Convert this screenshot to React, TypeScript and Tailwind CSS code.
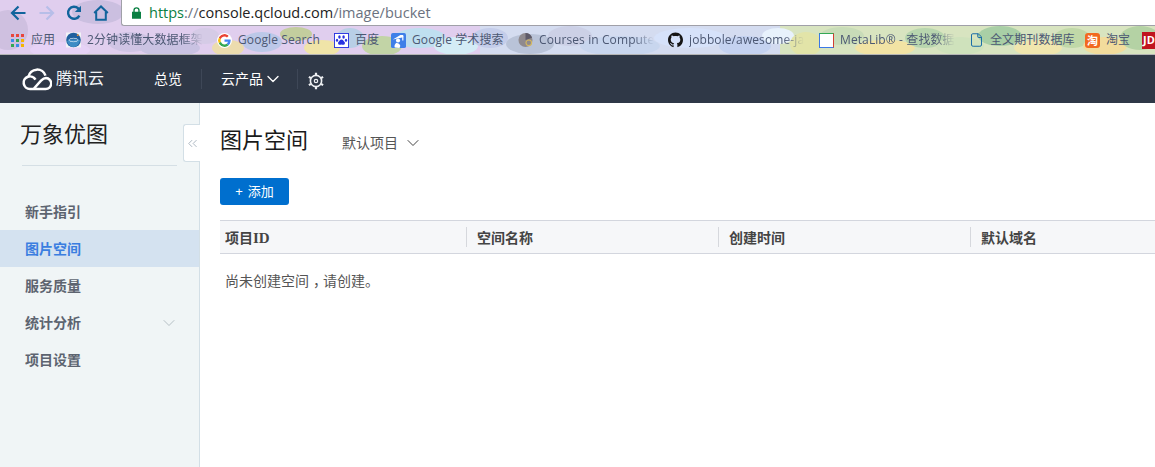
import React from 'react';
import { ChevronDown, ChevronsLeft, File } from 'lucide-react';

const cjk = '[font-family:"Liberation_Sans","Noto_Sans_CJK_SC",sans-serif]';
const chromeFont = '[font-family:"Open_Sans","Noto_Sans_CJK_SC",sans-serif]';

// cx, cy, rx, ry, fill for the browser theme wallpaper
const blobs: [number, number, number, number, string][] = [
  [8, 30, 20, 20, '#cfc0e0'], [98, 12, 26, 12, '#cbbfe0'], [60, 50, 30, 8, '#e6d2f6'],
  [130, 42, 22, 10, '#cfc4e4'], [170, 48, 30, 9, '#c9c2e2'], [205, 36, 14, 8, '#d5cbe6'],
  [228, 48, 16, 8, '#ecdcae'], [262, 42, 20, 10, '#bcc8e8'], [296, 34, 16, 7, '#c3cd9e'],
  [322, 48, 18, 8, '#f0e4a8'], [350, 38, 14, 10, '#b8cfe6'], [382, 46, 20, 10, '#c2d4a6'],
  [420, 38, 26, 10, '#bfdff0'], [456, 46, 22, 9, '#d4ecf6'], [490, 38, 18, 10, '#c4cdea'],
  [530, 44, 24, 10, '#b9c3d8'], [570, 36, 22, 10, '#ccd0e6'], [620, 46, 40, 10, '#c8d6ee'],
  [690, 38, 36, 10, '#d6e2fa'], [745, 46, 26, 10, '#c4d2f0'], [778, 36, 16, 8, '#e8f2fc'],
  [806, 44, 16, 12, '#e2e4a8'], [842, 36, 22, 9, '#c8dcb8'], [885, 48, 30, 8, '#f2e3a4'],
  [925, 38, 20, 10, '#b8d6ae'], [960, 46, 24, 9, '#cfe2bc'], [1000, 36, 22, 10, '#a9cfa6'],
  [1038, 48, 24, 8, '#f0e6ae'], [1072, 38, 18, 10, '#c0d8a8'], [1105, 46, 22, 9, '#f2dc9c'],
  [1140, 38, 20, 12, '#b4d2a4'],
];

function Wallpaper() {
  return (
    <svg className="absolute inset-0 h-full w-full" viewBox="0 0 1155 55">
      <rect width="1155" height="55" fill="#e0ceee" />
      <rect x="480" width="300" height="55" fill="#d4dcf0" />
      <rect x="780" width="375" height="55" fill="#d8e4c0" />
      {blobs.map(([cx, cy, rx, ry, fill], i) => (
        <ellipse key={i} cx={cx} cy={cy} rx={rx} ry={ry} fill={fill} />
      ))}
    </svg>
  );
}

function ToolbarIcons() {
  return (
    <div className="flex w-[121px] items-center pl-[10px]">
      <svg viewBox="0 0 16 16" className="h-[16px] w-[16px]" fill="none" stroke="#11649c" strokeWidth="2.2">
        <path d="M15.5 8H2M8.5 1.5 2 8l6.5 6.5" />
      </svg>
      <svg viewBox="0 0 16 16" className="ml-[13px] h-[16px] w-[16px]" fill="none" stroke="#b7bee8" strokeWidth="2.2">
        <path d="M.5 8H14M7.5 1.5 14 8l-6.5 6.5" />
      </svg>
      <svg viewBox="0 0 16 16" className="ml-[11px] h-[16px] w-[16px]" fill="none" stroke="#11649c" strokeWidth="2.4">
        <path d="M13.4 10.6A6 6 0 1 1 12.2 3.4L14 5.5" />
        <path d="M15 .8V7H8.8z" fill="#11649c" stroke="none" />
      </svg>
      <svg viewBox="0 0 16 16" className="ml-[11px] h-[16px] w-[16px]" fill="none" stroke="#11649c" strokeWidth="2">
        <path d="M1.2 8 8 1.5 14.8 8M3.2 7v7.8h9.6V7" />
      </svg>
    </div>
  );
}

function AppsIcon() {
  const colors = ['#e8453c', '#e8453c', '#e8453c', '#3b8ee8', '#34a853', '#f4b400', '#34a853', '#3b8ee8', '#f4b400'];
  return (
    <span className="grid h-[13px] w-[13px] grid-cols-3 gap-[2px]">
      {colors.map((c, i) => (
        <span key={i} className="h-[3px] w-[3px]" style={{ backgroundColor: c }} />
      ))}
    </span>
  );
}

function GoogleIcon() {
  return (
    <svg viewBox="0 0 48 48" className="h-[15px] w-[15px] rounded-full bg-white p-px">
      <path fill="#EA4335" d="M24 9.5c3.5 0 6.6 1.2 9.1 3.6l6.8-6.8C35.8 2.4 30.3 0 24 0 14.6 0 6.5 5.4 2.6 13.2l7.9 6.2C12.4 13.7 17.7 9.5 24 9.5z" />
      <path fill="#4285F4" d="M46.9 24.5c0-1.6-.1-3.1-.4-4.5H24v9h12.9c-.6 3-2.2 5.5-4.8 7.2l7.7 6c4.5-4.2 7.1-10.3 7.1-17.7z" />
      <path fill="#FBBC05" d="M10.5 28.6c-.5-1.4-.8-3-.8-4.6s.3-3.2.8-4.6l-7.9-6.2C.9 16.5 0 20.1 0 24s.9 7.5 2.6 10.8l7.9-6.2z" />
      <path fill="#34A853" d="M24 48c6.5 0 11.9-2.1 15.9-5.8l-7.7-6c-2.1 1.4-4.9 2.3-8.1 2.3-6.3 0-11.6-4.2-13.5-9.9l-7.9 6.2C6.5 42.6 14.6 48 24 48z" />
    </svg>
  );
}

function GithubIcon() {
  return (
    <svg viewBox="0 0 16 16" className="h-[16px] w-[16px]" fill="#161616">
      <path d="M8 0C3.58 0 0 3.58 0 8c0 3.54 2.29 6.53 5.47 7.59.4.07.55-.17.55-.38 0-.19-.01-.82-.01-1.49-2.01.37-2.53-.49-2.69-.94-.09-.23-.48-.94-.82-1.13-.28-.15-.68-.52-.01-.53.63-.01 1.08.58 1.23.82.72 1.21 1.87.87 2.33.66.07-.52.28-.87.51-1.07-1.78-.2-3.64-.89-3.64-3.95 0-.87.31-1.59.82-2.15-.08-.2-.36-1.02.08-2.12 0 0 .67-.21 2.2.82.64-.18 1.32-.27 2-.27s1.36.09 2 .27c1.53-1.04 2.2-.82 2.2-.82.44 1.1.16 1.92.08 2.12.51.56.82 1.27.82 2.15 0 3.07-1.87 3.75-3.65 3.95.29.25.54.73.54 1.48 0 1.07-.01 1.93-.01 2.2 0 .21.15.46.55.38A8.01 8.01 0 0 0 16 8c0-4.42-3.58-8-8-8z" />
    </svg>
  );
}

function BaiduIcon() {
  return (
    <svg viewBox="0 0 16 16" className="h-[15px] w-[15px]">
      <rect x=".5" y=".5" width="15" height="15" fill="white" stroke="#2932e1" />
      <g fill="#2932e1">
        <ellipse cx="5.8" cy="4.2" rx="1.3" ry="1.8" />
        <ellipse cx="10.2" cy="4.2" rx="1.3" ry="1.8" />
        <ellipse cx="3.2" cy="7.6" rx="1.2" ry="1.6" />
        <ellipse cx="12.8" cy="7.6" rx="1.2" ry="1.6" />
        <path d="M8 7c1.6 0 2 1.6 3 2.4 1.2 1 .8 3.2-1 3.2-.9 0-1.3-.3-2-.3s-1.1.3-2 .3c-1.8 0-2.2-2.2-1-3.2C6 8.600 6.400 7 8 7z" />
      </g>
    </svg>
  );
}

function ScholarIcon() {
  return (
    <svg viewBox="0 0 16 16" className="h-[15px] w-[15px]">
      <rect width="16" height="16" rx="2" fill="#3f7fe8" />
      <path d="M2 7 10 2l3 0v2.500z" fill="white" />
      <circle cx="7.500" cy="8" r="2.200" fill="white" />
      <path d="M6 10.500c3 1 5 2.500 3 5.500l-5-.5c-1-2 .5-4 2-5z" fill="white" />
      <rect x="12" y="3" width="1.200" height="5" fill="white" />
    </svg>
  );
}

function BigDataIcon() {
  return (
    <svg viewBox="0 0 16 16" className="h-[16px] w-[16px]">
      <rect width="16" height="16" fill="#f2f2f6" />
      <circle cx="8" cy="8" r="7.800" fill="#1f5f9e" />
      <path d="M1 9c3-2 10-2 14-1-1 5-4 7.500-7 7.500S2 13 1 9z" fill="#3d8cc4" />
      <ellipse cx="8" cy="8" rx="5" ry="1.800" fill="none" stroke="#d4e6f4" strokeWidth=".8" />
      <circle cx="12.500" cy="2.800" r="1" fill="#e88a30" />
    </svg>
  );
}

function CoursesIcon() {
  return (
    <svg viewBox="0 0 16 16" className="h-[16px] w-[16px]">
      <circle cx="8" cy="8" r="7.500" fill="#8f8a8e" />
      <path d="M8 .5a7.500 7.500 0 0 1 7 5L8 8z" fill="#5e5a68" />
      <circle cx="11.500" cy="11" r="3" fill="none" stroke="#d4b860" strokeWidth="1.200" />
    </svg>
  );
}

function Bookmark({ icon, label, width, fade }: { icon: React.ReactNode; label: string; width: number; fade?: boolean }) {
  return (
    <div className="flex shrink-0 items-center gap-[6px]" style={{ width }}>
      <span className="flex w-[15px] shrink-0 items-center justify-center">{icon}</span>
      <span
        className={`whitespace-nowrap text-[12px] tracking-[0.1px] text-[#4c5873] ${
          fade ? '[mask-image:linear-gradient(to_right,black_82%,transparent)]' : ''
        }`}
      >
        {label}
      </span>
    </div>
  );
}

function ChromeBar() {
  return (
    <div className={`relative h-[55px] overflow-hidden ${chromeFont}`}>
      <Wallpaper />
      <div className="relative flex h-[26px] items-center">
        <ToolbarIcons />
        <div className="flex h-[26px] flex-1 items-center rounded-bl-[3px] border-b border-l border-[#a0a0a8] bg-white pl-[10px] text-[14.5px]">
          <svg viewBox="0 0 10 13" className="mr-[8px] h-[12px] w-[9px] shrink-0" fill="#0b8043">
            <path d="M1.500 5V3.500a3.500 3.500 0 0 1 7 0V5H10v8H0V5zM3 5h4V3.500a2 2 0 0 0-4 0z" />
          </svg>
          <span className="text-[#0b8043]">https</span>
          <span className="text-[#6b7280]">://</span>
          <span className="text-[#222]">console.qcloud.com</span>
          <span className="text-[#6b7280]">/image/bucket</span>
        </div>
      </div>
      <div className="relative flex h-[29px] items-center border-b border-[#b5b5b5] pl-[10px]">
        <Bookmark icon={<AppsIcon />} label="应用" width={56} />
        <Bookmark icon={<BigDataIcon />} label="2分钟读懂大数据框架" width={151} fade />
        <Bookmark icon={<GoogleIcon />} label="Google Search" width={117} />
        <Bookmark icon={<BaiduIcon />} label="百度" width={57} />
        <Bookmark icon={<ScholarIcon />} label="Google 学术搜索" width={127} />
        <Bookmark icon={<CoursesIcon />} label="Courses in Compute" width={150} fade />
        <Bookmark icon={<GithubIcon />} label="jobbole/awesome-ja" width={151} fade />
        <Bookmark
          icon={<span className="h-[15px] w-[15px] border border-b-[#3b78e7] border-l-[#3b78e7] border-r-[#d23f31] border-t-[#34a853] bg-white" />}
          label="MetaLib® - 查找数据"
          width={150}
          fade
        />
        <Bookmark icon={<File size={16} strokeWidth={1.6} className="text-[#1b6ea8]" />} label="全文期刊数据库" width={116} />
        <Bookmark
          icon={<span className="flex h-[15px] w-[15px] items-center justify-center rounded-[3px] bg-[#f2691f] text-[11px] font-bold leading-none text-white">淘</span>}
          label="淘宝"
          width={57}
        />
        <span className="flex h-[17px] w-[13px] shrink-0 items-center overflow-hidden bg-[#c0141f] pl-px text-[11px] font-bold text-white">JD</span>
      </div>
    </div>
  );
}

function CloudLogo() {
  return (
    <svg viewBox="0 0 30 23" className="h-[23px] w-[30px]" fill="none" stroke="white" strokeWidth="2.5">
      <path d="M8 21h15.500a5.500 5.500 0 0 0 .5-11c-2.500 0-3.500 1.200-5 2.700L11.500 21" />
      <path d="M6.500 8.700a8.800 8.800 0 0 1 17-1" />
      <path d="M8 21a6.300 6.300 0 1 1 5.500-9.300" />
    </svg>
  );
}

function GearIcon() {
  return (
    <svg viewBox="0 0 18 18" className="h-[18px] w-[18px]" fill="none" stroke="#eef0f3">
      <circle cx="9" cy="9" r="5.600" strokeWidth="1.600" />
      <circle cx="9" cy="9" r="1.700" strokeWidth="1.200" />
      <path d="M9 .8v2.400M9 14.800v2.400M1.900 4.900l2.100 1.200M14 11.900l2.100 1.200M1.900 13.100 4 11.900M14 6.100l2.100-1.200" strokeWidth="2.200" />
    </svg>
  );
}

function TopNav() {
  return (
    <header className={`flex h-[48px] items-center bg-[#2f3847] text-[14px] text-white ${cjk}`}>
      <div className="flex w-[154px] items-center pl-[22px]">
        <CloudLogo />
        <span className="ml-[4px] whitespace-nowrap text-[16px] text-[#f0f2f5]">腾讯云</span>
      </div>
      <span>总览</span>
      <div className="ml-[19px] h-[20px] w-px bg-[#3e4757]" />
      <div className="ml-[19px] flex items-center">
        <span>云产品</span>
        <ChevronDown size={20} strokeWidth={1.6} />
      </div>
      <div className="ml-[14px] h-[20px] w-px bg-[#3e4757]" />
      <span className="ml-[9px] mt-[3px]">
        <GearIcon />
      </span>
    </header>
  );
}

const sideItems = [
  { label: '新手指引' },
  { label: '图片空间', active: true },
  { label: '服务质量' },
  { label: '统计分析', hasChildren: true },
  { label: '项目设置' },
];

function Sidebar() {
  return (
    <aside className="relative w-[200px] shrink-0 border-r border-[#d3dfe6] bg-[#f0f5f6]">
      <div className="mx-[20px] h-[62px] pt-[17px] text-[22px] leading-[30px] text-[#222]">万象优图</div>
      <div className="mx-[22px] h-px bg-[#d5dfe5]" />
      <nav className="mt-[27px]">
        {sideItems.map(item => (
          <div
            key={item.label}
            className={`flex h-[37px] items-center justify-between pl-[25px] pr-[20px] text-[14px] font-bold ${
              item.active ? 'bg-[#d4e2f0] text-[#3b7ee0]' : 'text-[#5d6470]'
            }`}
          >
            <span className="pt-[1px]">{item.label}</span>
            {item.hasChildren && <ChevronDown size={20} strokeWidth={1} className="text-[#a9b4bb]" />}
          </div>
        ))}
      </nav>
      <button className="absolute -right-px top-[21px] flex h-[38px] w-[17px] items-center justify-center rounded-l-[3px] border border-r-0 border-[#d3dfe6] bg-white">
        <ChevronsLeft size={15} strokeWidth={1.3} className="text-[#9aa8b4]" />
      </button>
    </aside>
  );
}

function Content() {
  return (
    <main className="min-w-0 flex-1 overflow-hidden bg-white pl-[20px]">
      <div className="flex h-[75px] items-start pt-[22px]">
        <h1 className="text-[22px] leading-[32px] text-[#1a1a1a]">图片空间</h1>
        <div className="ml-[34px] mt-[2px] flex h-[32px] items-center text-[14px] text-[#555]">
          默认项目
          <ChevronDown size={20} strokeWidth={1.2} className="ml-[5px] text-[#444]" />
        </div>
      </div>
      <button className="flex h-[27px] w-[69px] items-center justify-center gap-[5px] rounded-[3px] bg-[#006fce] text-[13px] text-white">
        <span>+</span>
        <span>添加</span>
      </button>
      <div className="mt-[15px] flex h-[34px] w-[1000px] border-y border-[#d3d6de] bg-[#f6f7f9]">
        <div className="flex h-full w-[246px] shrink-0 items-center">
          <span className='pl-[5px] pt-[2px] text-[14px] font-bold text-[#444] [font-family:"Liberation_Serif","Noto_Sans_CJK_SC",serif]'>
            项目<span className="text-[15px]">ID</span>
          </span>
        </div>
        {['空间名称', '创建时间', '默认域名'].map(col => (
          <div key={col} className="flex h-full w-[252px] shrink-0 items-center">
            <div className="mr-[10px] h-[20px] w-px bg-[#d6d8dd]" />
            <span className="pt-[2px] text-[14px] font-bold text-[#444]">{col}</span>
          </div>
        ))}
      </div>
      <p className="mt-[18px] pl-[5px] text-[14px] leading-[18px] text-[#555]">
        尚未创建空间<span className="pl-[4px] tracking-[-4px]">，</span>请创建。
      </p>
    </main>
  );
}

export default function App() {
  return (
    <div className={`flex h-[467px] w-[1155px] flex-col overflow-hidden bg-white ${cjk}`}>
      <ChromeBar />
      <TopNav />
      <div className="flex min-h-0 flex-1">
        <Sidebar />
        <Content />
      </div>
    </div>
  );
}
